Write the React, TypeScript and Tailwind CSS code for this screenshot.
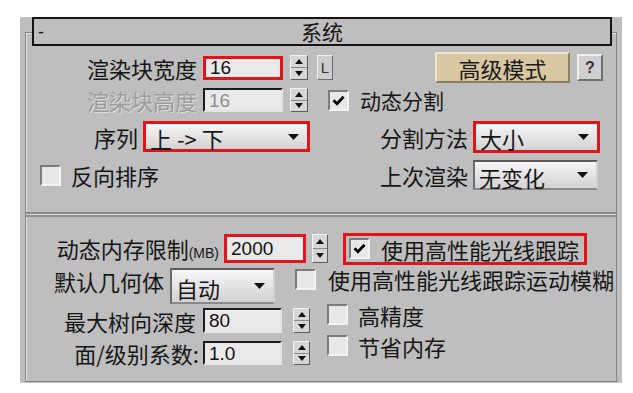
import type { ReactNode } from "react";

const cjk = "font-['Noto_Sans_CJK_SC',sans-serif]";
const num = "font-['Liberation_Sans',Arial,sans-serif]";

function Spinner({ className = "" }: { className?: string }) {
  return (
    <div
      className={`flex shrink-0 flex-col gap-px border border-t-[#f2f2f2] border-l-[#f2f2f2] border-r-[#5e5e5e] border-b-[#5e5e5e] bg-[#8a8a8a] ${className}`}
    >
      <div className="flex flex-1 items-center justify-center bg-[#d6d6d6]">
        <svg width="8" height="5" viewBox="0 0 8 5">
          <path d="M4 0 8 5H0Z" fill="#111" />
        </svg>
      </div>
      <div className="flex flex-1 items-center justify-center bg-[#d6d6d6]">
        <svg width="8" height="5" viewBox="0 0 8 5">
          <path d="M0 0h8L4 5Z" fill="#111" />
        </svg>
      </div>
    </div>
  );
}

function Box({ checked = false, className = "" }: { checked?: boolean; className?: string }) {
  return (
    <div
      className={`flex h-[21px] w-[21px] shrink-0 items-center justify-center border-2 border-t-[#7c7c7c] border-l-[#7c7c7c] border-r-[#f3f3f3] border-b-[#f3f3f3] bg-[#e8e8e8] ${className}`}
    >
      {checked ? (
        <svg width="13" height="11" viewBox="0 0 13 11">
          <path d="M1.5 5.2 5 8.8 11.6 1.8" fill="none" stroke="#000" strokeWidth="2.8" />
        </svg>
      ) : null}
    </div>
  );
}

function Field({
  value,
  red = false,
  disabled = false,
  className = "",
}: {
  value: string;
  red?: boolean;
  disabled?: boolean;
  className?: string;
}) {
  const frame = red
    ? "border-[3px] border-[#e2141b]"
    : "border-2 border-t-[#1c1c1c] border-l-[#1c1c1c] border-r-[#e4e4e4] border-b-[#e4e4e4]";
  return (
    <div
      className={`flex shrink-0 items-center bg-[#e9e9e9] pl-[4px] text-[19px] leading-none ${num} ${frame} ${
        disabled ? "text-[#8f8f8f]" : "text-[#111]"
      } ${className}`}
    >
      {value}
    </div>
  );
}

function Select({
  value,
  red = false,
  className = "",
}: {
  value: string;
  red?: boolean;
  className?: string;
}) {
  const frame = red
    ? "border-[3px] border-[#e2141b]"
    : "border-2 border-t-[#5c5c5c] border-l-[#6a6a6a] border-r-[#d0d0d0] border-b-[#8a8a8a]";
  return (
    <div
      className={`flex shrink-0 items-center justify-between bg-linear-to-b from-[#f6f6f6] to-[#d2d2d2] pl-[4px] pr-[8px] text-[22px] leading-none ${frame} ${className}`}
    >
      <span className="pt-[3px]">{value}</span>
      <svg width="11" height="6" viewBox="0 0 11 6">
        <path d="M0 0h11L5.5 6Z" fill="#111" />
      </svg>
    </div>
  );
}

function Label({ children, className = "" }: { children: ReactNode; className?: string }) {
  return (
    <span className={`block shrink-0 text-right text-[22px] leading-none ${className}`}>
      {children}
    </span>
  );
}

export default function App() {
  return (
    <div className={`h-[393px] w-[633px] overflow-hidden bg-white pl-[20px] pt-[17px] text-[#161616] ${cjk}`}>
      <div className="h-[366px] w-[602px] bg-[#bebebe] px-[5px] pt-[15px]">
        <div className="h-[350px] border border-[#848484] shadow-[inset_1px_1px_0_#e2e2e2]">
          {/* rollout title */}
          <div className="-mt-[16px] ml-[6px] grid h-[29px] w-[580px] grid-cols-[1fr_auto_1fr] items-center border-2 border-[#141414] bg-[#bebebe]">
            <span className={`pl-[4px] text-[18px] leading-none ${num}`}>-</span>
            <span className="text-[21px] leading-none">系统</span>
            <span />
          </div>

          {/* top block */}
          <div className="mt-[6px] flex h-[31px] items-center">
            <Label className="w-[171px]">渲染块宽度</Label>
            <Field value="16" red className="ml-[6px] h-[24px] w-[80px]" />
            <Spinner className="ml-[7px] h-[25px] w-[18px]" />
            <div
              className={`ml-[9px] flex h-[25px] w-[16px] items-center justify-center border border-t-[#f0f0f0] border-l-[#f0f0f0] border-r-[#6c6c6c] border-b-[#6c6c6c] bg-[#cdcdcd] text-[15px] leading-none text-[#333] ${num}`}
            >
              L
            </div>
            <div className="ml-[102px] flex h-[31px] w-[135px] items-center justify-center border-2 border-t-[#efe5cf] border-l-[#efe5cf] border-r-[#8c7f62] border-b-[#8c7f62] bg-[#d8c7a2] text-[22px] leading-none text-[#1b1b1b]">
              高级模式
            </div>
            <div
              className={`ml-[7px] flex h-[27px] w-[26px] items-center justify-center border-2 border-t-[#f0f0f0] border-l-[#f0f0f0] border-r-[#707070] border-b-[#707070] bg-[#cfcfcf] text-[16px] font-bold leading-none text-[#333] ${num}`}
            >
              ?
            </div>
          </div>

          <div className="mt-[5px] flex h-[24px] items-center">
            <Label className="w-[171px] text-[#9b9b9b] [text-shadow:1px_1px_0_#dedede]">渲染块高度</Label>
            <Field value="16" disabled className="ml-[6px] h-[24px] w-[80px]" />
            <Spinner className="ml-[7px] h-[24px] w-[18px]" />
            <Box checked className="ml-[20px]" />
            <span className="ml-[11px] text-[21px] leading-none">动态分割</span>
          </div>

          <div className="mt-[9px] flex h-[31px] items-center">
            <div className="flex w-[284px] items-center">
              <Label className="w-[112px]">序列</Label>
              <Select value="上 -> 下" red className="ml-[5px] h-[31px] w-[167px]" />
            </div>
            <Label className="w-[158px]">分割方法</Label>
            <Select value="大小" red className="ml-[5px] h-[32px] w-[127px]" />
          </div>

          <div className="mt-[8px] flex h-[30px] items-center">
            <div className="flex w-[284px] items-center">
              <Box className="ml-[14px]" />
              <span className="ml-[10px] text-[22px] leading-none">反向排序</span>
            </div>
            <Label className="w-[158px]">上次渲染</Label>
            <Select value="无变化" className="ml-[5px] h-[30px] w-[125px]" />
          </div>

          {/* divider */}
          <div className="mt-[22px] flex h-[5px] flex-col">
            <div className="h-[2px] bg-[#8a8a8a]" />
            <div className="h-px bg-[#dcdcdc]" />
            <div className="h-[2px] bg-[#8e8e8e]" />
          </div>

          {/* bottom block */}
          <div className="mt-[15px] flex h-[33px] items-center">
            <Label className="w-[193px]">
              动态内存限制<span className={`text-[14px] ${num}`}>(MB)</span>
            </Label>
            <Field value="2000" red className="ml-[5px] h-[29px] w-[82px]" />
            <Spinner className="ml-[6px] h-[29px] w-[16px]" />
            <div className="ml-[15px] flex h-[32px] w-[244px] items-center border-[3px] border-[#e2141b]">
              <Box checked className="ml-[3px]" />
              <span className="ml-[11px] text-[22px] leading-none">使用高性能光线跟踪</span>
            </div>
          </div>

          <div className="mt-[3px] flex h-[35px] items-start">
            <Label className="mt-[2px] w-[138px]">默认几何体</Label>
            <Select value="自动" className="ml-[6px] h-[36px] w-[105px]" />
            <Box className="ml-[20px] mt-[1px]" />
            <span className="ml-[12px] text-[22px] leading-none">使用高性能光线跟踪运动模糊</span>
          </div>

          <div className="flex">
            <div className="w-[289px]">
              <div className="mt-[5px] flex h-[25px] items-center">
                <Label className="w-[170px]">最大树向深度</Label>
                <Field value="80" className="ml-[7px] h-[25px] w-[79px]" />
                <Spinner className="ml-[11px] h-[25px] w-[17px]" />
              </div>
              <div className="mt-[8px] flex h-[24px] items-center">
                <Label className="w-[173px]">面/级别系数:</Label>
                <Field value="1.0" className="ml-[4px] h-[24px] w-[79px]" />
                <Spinner className="ml-[11px] h-[24px] w-[17px]" />
              </div>
            </div>
            <div>
              <div className="flex h-[23px] items-center">
                <Box className="ml-[12px]" />
                <span className="ml-[10px] text-[22px] leading-none">高精度</span>
              </div>
              <div className="mt-[8px] flex h-[23px] items-center">
                <Box className="ml-[12px]" />
                <span className="ml-[10px] text-[22px] leading-none">节省内存</span>
              </div>
            </div>
          </div>
        </div>
      </div>
    </div>
  );
}
